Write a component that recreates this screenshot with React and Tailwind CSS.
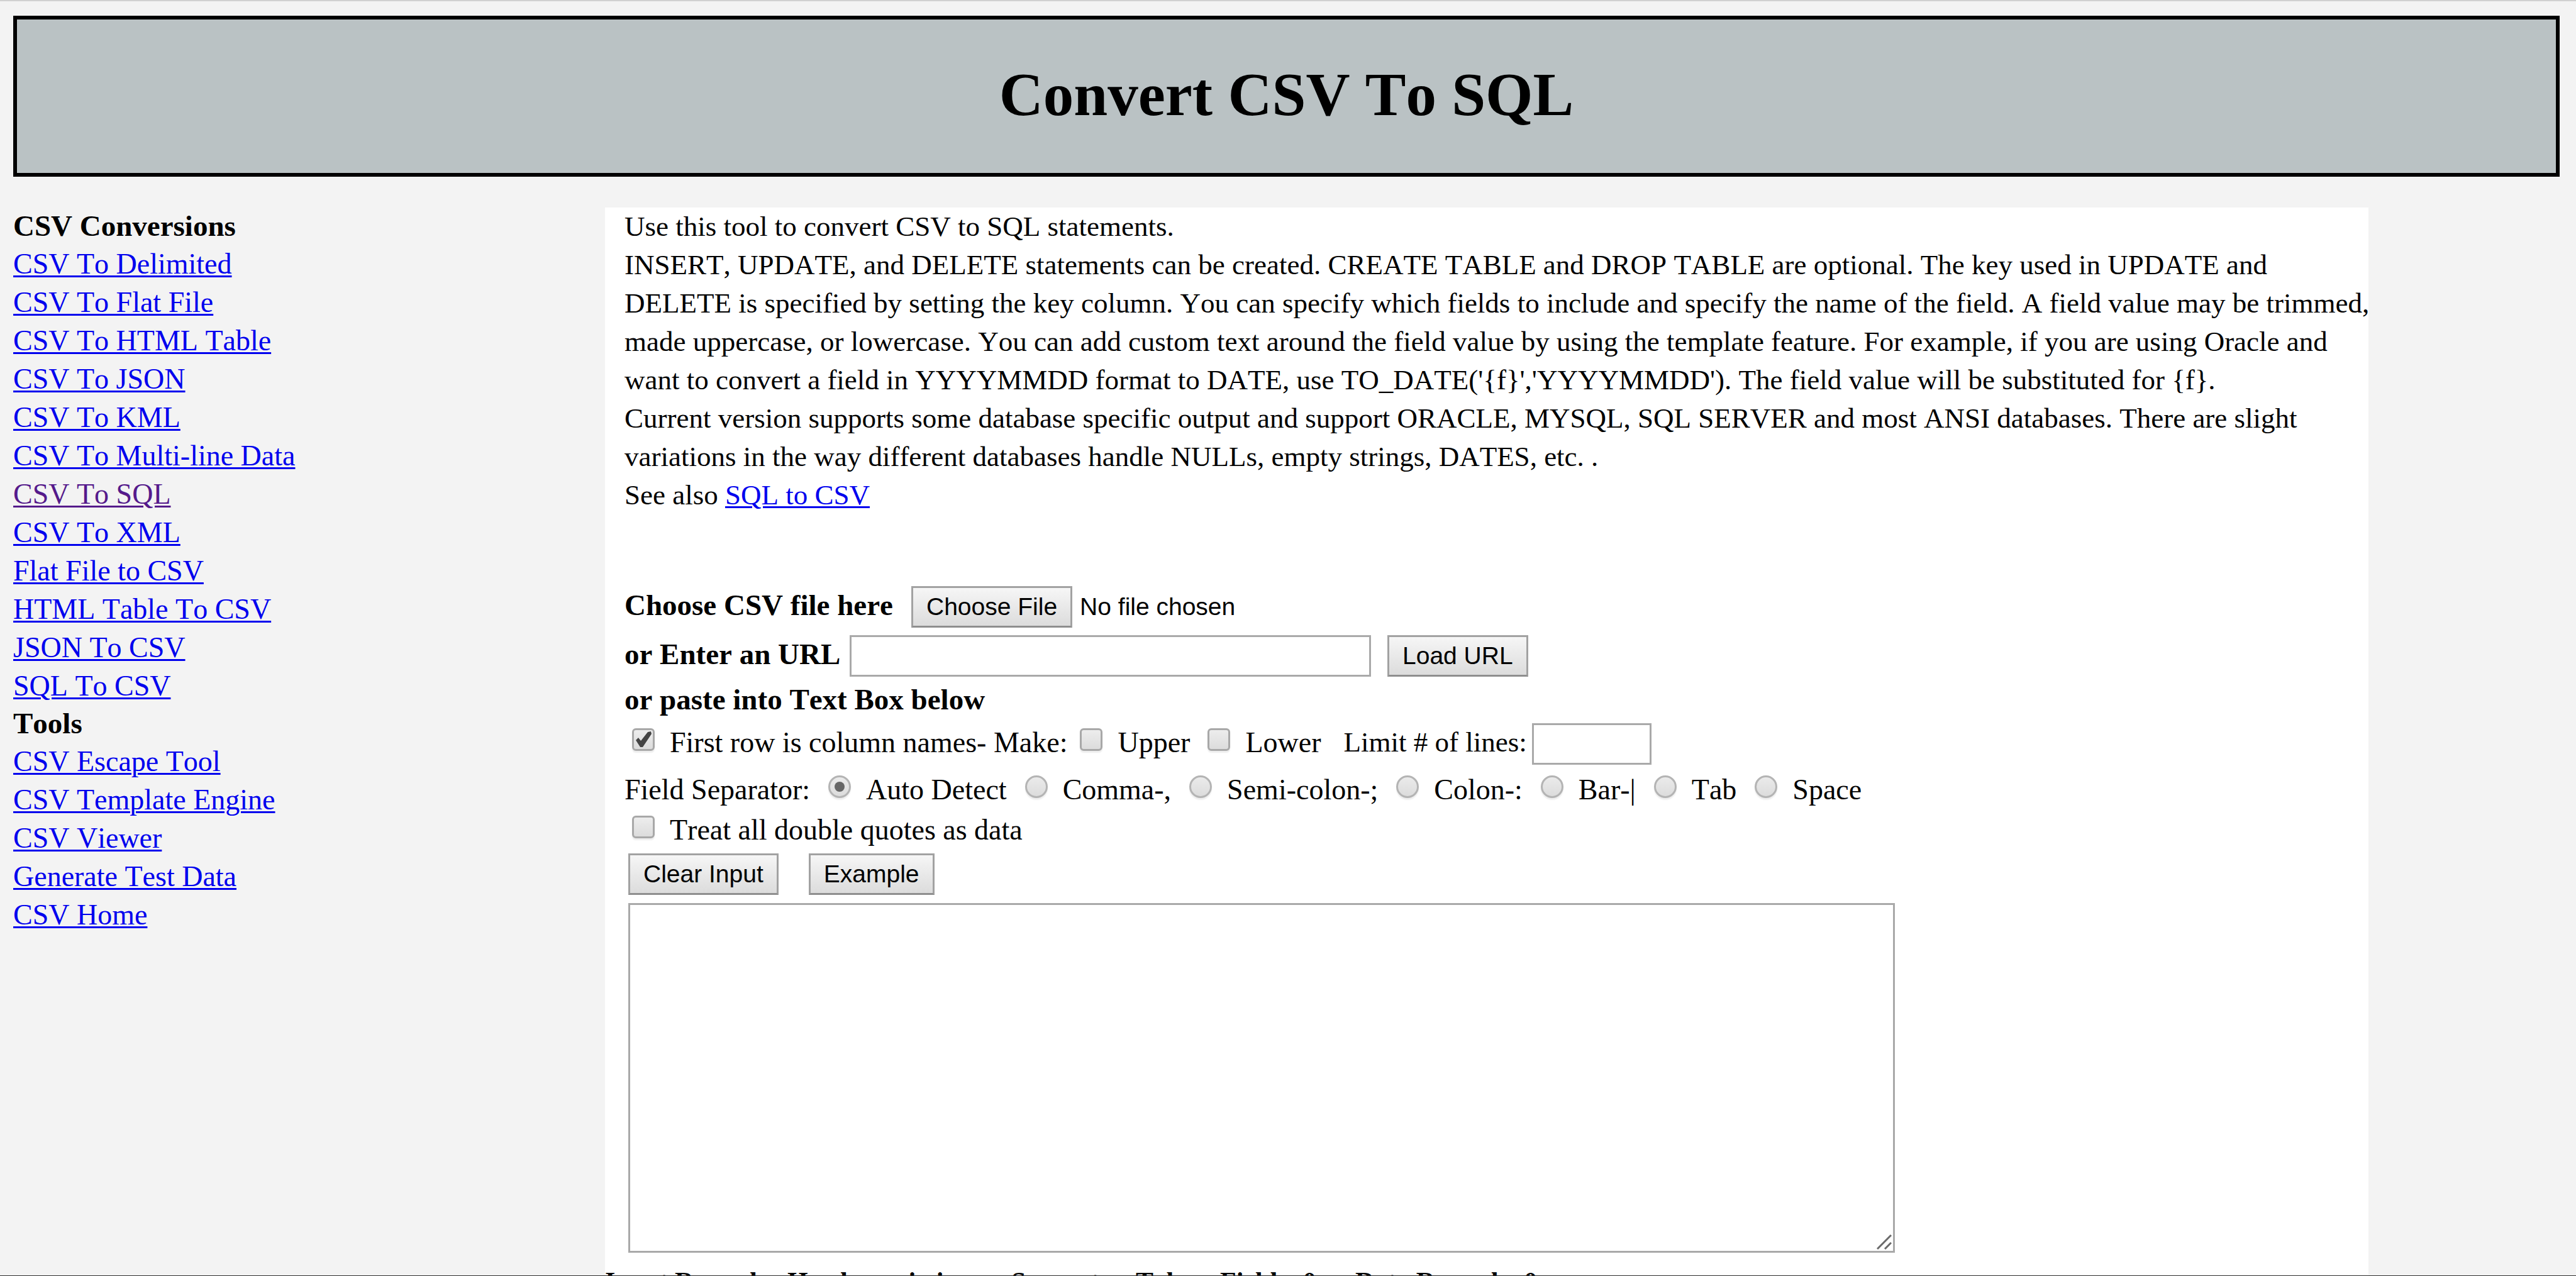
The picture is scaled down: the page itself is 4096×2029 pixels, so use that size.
const conversions = [
  "CSV To Delimited",
  "CSV To Flat File",
  "CSV To HTML Table",
  "CSV To JSON",
  "CSV To KML",
  "CSV To Multi-line Data",
  "CSV To SQL",
  "CSV To XML",
  "Flat File to CSV",
  "HTML Table To CSV",
  "JSON To CSV",
  "SQL To CSV",
];

const tools = [
  "CSV Escape Tool",
  "CSV Template Engine",
  "CSV Viewer",
  "Generate Test Data",
  "CSV Home",
];

const separators = [
  ["auto", "Auto Detect"],
  ["comma", "Comma-,"],
  ["semicolon", "Semi-colon-;"],
  ["colon", "Colon-:"],
  ["bar", "Bar-|"],
  ["tab", "Tab"],
  ["space", "Space"],
];

function Link({ children, visited = false }) {
  return (
    <a
      href="#"
      className={
        visited
          ? "text-[#551a8b] underline decoration-[3px] underline-offset-[3px]"
          : "text-[#0000ee] underline decoration-[3px] underline-offset-[3px]"
      }
    >
      {children}
    </a>
  );
}

function Button({ children }) {
  return (
    <button
      type="button"
      className="h-[66px] border-[3px] border-[#a2a2a2] border-b-[#8e8e8e] bg-linear-to-b from-[#f6f6f6] to-[#dcdcdc] px-[21px] font-['Liberation_Sans',sans-serif] text-[39px] leading-[60px]"
    >
      {children}
    </button>
  );
}

function Checkbox({ id, label, defaultChecked = false }) {
  return (
    <span className="flex gap-6">
      <span className="relative mt-2 size-9">
        <input
          id={id}
          type="checkbox"
          defaultChecked={defaultChecked}
          className="peer block size-9 appearance-none rounded-[6px] border-[3px] border-[#a8a8a8] bg-linear-to-b from-[#ededed] to-[#dcdcdc] shadow-[0_3px_2px_#eeeeee]"
        />
        <svg
          viewBox="0 0 36 36"
          className="pointer-events-none absolute inset-0 hidden size-9 peer-checked:block"
          aria-hidden="true"
        >
          <path
            d="M6 19 L10 15 L14 20 L25 6 L30 5 L31 9 L17 30 L13 30 Z"
            fill="#444444"
          />
        </svg>
      </span>
      <label htmlFor={id}>{label}</label>
    </span>
  );
}

function Radio({ id, label, defaultChecked = false }) {
  return (
    <span className="flex gap-6">
      <span className="relative mt-2 size-9">
        <input
          id={id}
          name="separator"
          type="radio"
          defaultChecked={defaultChecked}
          className="peer block size-9 appearance-none rounded-full border-[3px] border-[#b4b4b4] bg-linear-to-b from-[#ebebeb] to-[#dcdcdc] shadow-[0_3px_2px_#eeeeee]"
        />
        <span className="pointer-events-none absolute inset-0 m-auto hidden size-4 rounded-full bg-[#666666] peer-checked:block" />
      </span>
      <label htmlFor={id}>{label}</label>
    </span>
  );
}

export default function App() {
  return (
    <div className="flex h-screen flex-col overflow-hidden border-t-2 border-b border-t-[#d0d0d0] border-b-[#2e2e2e] bg-[#f3f3f3] font-['Liberation_Serif',serif] text-[46px] leading-[61px] text-black [font-kerning:none]">
      <header className="mt-[23px] mr-[26px] ml-[21px] flex h-[256px] shrink-0 items-center justify-center border-[6px] border-black bg-[#bac2c4] pb-1">
        <h1 className="text-[97px] leading-[110px] font-bold">
          Convert CSV To SQL
        </h1>
      </header>

      <div className="mt-[49px] mr-[26px] ml-[21px] grid min-h-0 grow grid-cols-[941fr_2804fr_304fr] whitespace-nowrap">
        <nav className="min-w-0">
          <h2 className="text-[47px] leading-[59px] font-bold">
            CSV Conversions
          </h2>
          <ul>
            {conversions.map((name) => (
              <li key={name}>
                <Link visited={name === "CSV To SQL"}>{name}</Link>
              </li>
            ))}
          </ul>
          <h2 className="text-[47px] leading-[59px] font-bold">Tools</h2>
          <ul>
            {tools.map((name) => (
              <li key={name}>
                <Link>{name}</Link>
              </li>
            ))}
          </ul>
        </nav>

        <main className="min-w-0 bg-white">
          <div className="pl-[31px]">
            <p className="text-[45px]">
              Use this tool to convert CSV to SQL statements.
              <br />
              INSERT, UPDATE, and DELETE statements can be created. CREATE TABLE
              and DROP TABLE are optional. The key used in UPDATE and
              <br />
              DELETE is specified by setting the key column. You can specify
              which fields to include and specify the name of the field. A field
              value may be trimmed,
              <br />
              made uppercase, or lowercase. You can add custom text around the
              field value by using the template feature. For example, if you are
              using Oracle and
              <br />
              want to convert a field in YYYYMMDD format to DATE, use
              TO_DATE('{"{f}"}','YYYYMMDD'). The field value will be substituted
              for {"{f}"}.
              <br />
              Current version supports some database specific output and support
              ORACLE, MYSQL, SQL SERVER and most ANSI databases. There are slight
              <br />
              variations in the way different databases handle NULLs, empty
              strings, DATES, etc. .
              <br />
              See also <Link>SQL to CSV</Link>
            </p>

            <form className="mt-[114px]">
              <div className="flex h-[78px]">
                <label
                  htmlFor="choose"
                  className="w-[456px] text-[47px] font-bold"
                >
                  Choose CSV file here
                </label>
                <input
                  id="choose"
                  type="file"
                  className="h-[66px] w-[700px] font-['Liberation_Sans',sans-serif] text-[39px] leading-[60px] file:mr-3 file:h-[66px] file:border-[3px] file:border-solid file:border-[#a2a2a2] file:border-b-[#8e8e8e] file:bg-linear-to-b file:from-[#f6f6f6] file:to-[#dcdcdc] file:px-[21px] file:leading-[60px]"
                />
              </div>

              <div className="flex h-[72px]">
                <label
                  htmlFor="url"
                  className="w-[358px] text-[47px] font-bold"
                >
                  or Enter an URL
                </label>
                <input
                  id="url"
                  type="text"
                  className="mr-[26px] h-[66px] w-[829px] border-[3px] border-[#a9a9a9] bg-white px-2"
                />
                <Button>Load URL</Button>
              </div>

              <div className="flex h-[68px]">
                <label htmlFor="csv" className="text-[47px] font-bold">
                  or paste into Text Box below
                </label>
              </div>

              <div className="flex h-[75px] pl-3">
                <Checkbox
                  id="header"
                  label="First row is column names- Make:"
                  defaultChecked
                />
                <span className="w-5" />
                <Checkbox id="upper" label="Upper" />
                <span className="w-7" />
                <Checkbox id="lower" label="Lower" />
                <label htmlFor="limit" className="mr-2 ml-9 text-[45px]">
                  Limit # of lines:
                </label>
                <input
                  id="limit"
                  type="text"
                  className="h-[66px] w-[190px] border-[3px] border-[#a9a9a9] bg-white px-2"
                />
              </div>

              <fieldset className="flex h-16 gap-[29px]">
                <legend className="float-left">Field Separator:</legend>
                {separators.map(([id, label]) => (
                  <Radio
                    key={id}
                    id={id}
                    label={label}
                    defaultChecked={id === "auto"}
                  />
                ))}
              </fieldset>

              <div className="flex h-[68px] pl-3">
                <Checkbox id="quotes" label="Treat all double quotes as data" />
              </div>

              <div className="flex h-[79px] gap-12 pl-[6px]">
                <Button>Clear Input</Button>
                <Button>Example</Button>
              </div>

              <div className="relative ml-[6px] w-[2014px]">
                <textarea
                  id="csv"
                  className="block h-[556px] w-full resize-none border-[3px] border-[#a9a9a9] bg-white p-2"
                />
                <svg
                  viewBox="0 0 24 24"
                  className="pointer-events-none absolute right-[5px] bottom-[5px] size-6"
                  stroke="#6a6a6a"
                  strokeWidth="3"
                  aria-hidden="true"
                >
                  <path d="M1 23 L23 1 M13 23 L23 13" fill="none" />
                </svg>
              </div>
            </form>
          </div>

          <p className="mt-4 flex text-[42px] font-bold">
            <span className="w-[290px]">Input Records-</span>
            <span className="w-[356px]">Header: missing</span>
            <span className="w-[198px]">Separator:</span>
            <span className="w-[134px]">Tab</span>
            <span className="w-[215px]">Fields: 0</span>
            <span>Data Records: 0</span>
          </p>
        </main>
      </div>
    </div>
  );
}
